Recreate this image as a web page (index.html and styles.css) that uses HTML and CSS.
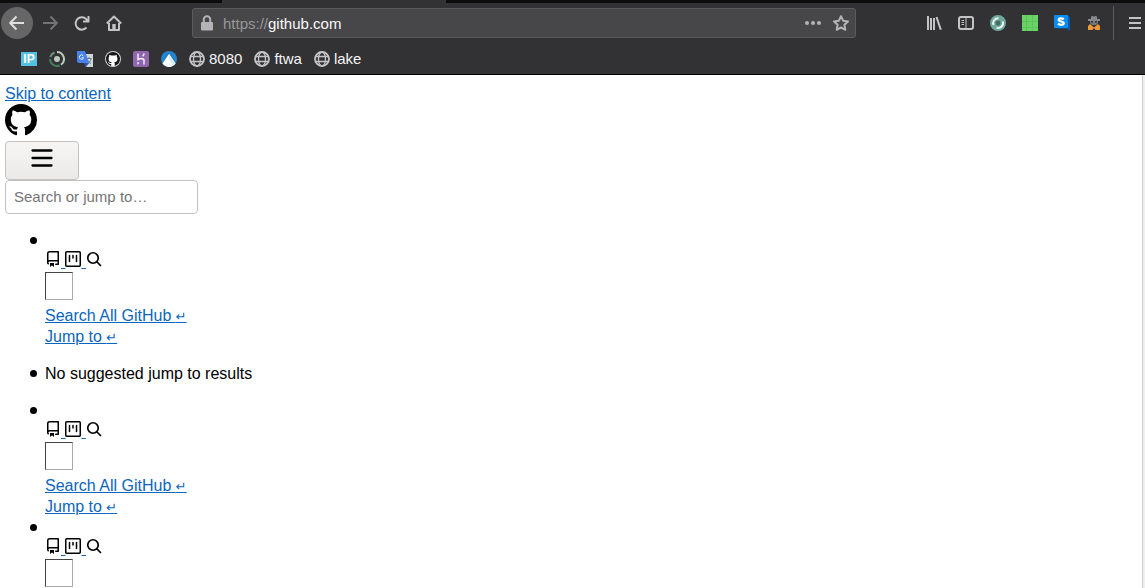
FILE: index.html
```html
<!DOCTYPE html>
<html lang="en">
<head>
<meta charset="utf-8">
<title>GitHub</title>
<link rel="stylesheet" href="styles.css">
</head>
<body>
<svg class="defs" width="0" height="0" aria-hidden="true">
  <symbol id="mark" viewBox="0 0 16 16"><path d="M8 0C3.58 0 0 3.58 0 8c0 3.54 2.29 6.53 5.47 7.59.4.07.55-.17.55-.38 0-.19-.01-.82-.01-1.49-2.01.37-2.53-.49-2.69-.94-.09-.23-.48-.94-.82-1.13-.28-.15-.68-.52-.01-.53.63-.01 1.08.58 1.23.82.72 1.21 1.87.87 2.33.66.07-.52.28-.87.51-1.07-1.78-.2-3.64-.89-3.64-3.95 0-.87.31-1.59.82-2.15-.08-.2-.36-1.02.08-2.12 0 0 .67-.21 2.2.82.64-.18 1.32-.27 2-.27s1.36.09 2 .27c1.53-1.04 2.2-.82 2.2-.82.44 1.1.16 1.92.08 2.12.51.56.82 1.27.82 2.15 0 3.07-1.87 3.75-3.65 3.95.29.25.54.73.54 1.48 0 1.07-.01 1.93-.01 2.2 0 .21.15.46.55.38A8.01 8.01 0 0 0 16 8c0-4.42-3.58-8-8-8z"/></symbol>
  <symbol id="repo" viewBox="0 0 16 16"><path fill-rule="evenodd" d="M2 2.5A2.5 2.5 0 014.500 0h8.750a.75.75 0 01.75.75v12.500a.75.75 0 01-.75.75h-2.500a.75.75 0 110-1.500h1.750v-2h-8a1 1 0 00-.714 1.700.75.75 0 01-1.072 1.050A2.495 2.495 0 012 11.500v-9zm10.500-1V9h-8c-.356 0-.694.074-1 .208V2.500a1 1 0 011-1h8zM5 12.250v3.250a.25.25 0 00.4.2l1.450-1.087a.25.25 0 01.3 0L8.600 15.700a.25.25 0 00.4-.2v-3.250a.25.25 0 00-.25-.25h-3.500a.25.25 0 00-.25.25z"/></symbol>
  <symbol id="project" viewBox="0 0 16 16"><rect x=".75" y=".75" width="14.500" height="14.500" rx="1" fill="none" stroke="currentColor" stroke-width="1.500"/><path d="M4.500 4.500v6M8 4.500v2.500M11.500 4.500v6" fill="none" stroke="currentColor" stroke-width="1.500" stroke-linecap="round"/></symbol>
  <symbol id="search" viewBox="0 0 16 16"><circle cx="7" cy="7" r="5.250" fill="none" stroke="currentColor" stroke-width="1.700"/><path d="M11 11l3.500 3.500" fill="none" stroke="currentColor" stroke-width="1.700" stroke-linecap="round"/></symbol>
  <symbol id="globe" viewBox="0 0 16 16"><g fill="none" stroke="currentColor"><circle cx="8" cy="8" r="7" stroke-width="1.800"/><ellipse cx="8" cy="8" rx="3.500" ry="7" stroke-width="1.300"/><path d="M1.500 5.500h13M1.500 10.500h13" stroke-width="1.300"/></g></symbol>
</svg>

<header class="chrome">
  <div class="tabs"><div class="tab"></div></div>
  <nav class="toolbar" aria-label="Navigation">
    <button class="tool back" aria-label="Back"><svg width="16" height="16" viewBox="0 0 16 16"><path d="M15 8H1.500M7.500 1.500L1.200 8l6.300 6.500" class="line"/></svg></button>
    <button class="tool dim" aria-label="Forward"><svg width="16" height="16" viewBox="0 0 16 16"><path d="M1 8h13.500M8.500 1.500L14.800 8l-6.300 6.500" class="line"/></svg></button>
    <button class="tool" aria-label="Reload"><svg width="16" height="16" viewBox="0 0 16 16"><path d="M12.500 12.500A6.200 6.200 0 1 1 13.500 6M14.500 1v5.500H9" class="line"/></svg></button>
    <button class="tool" aria-label="Home"><svg width="16" height="16" viewBox="0 0 16 16"><path d="M.8 8.500L8 1.500l7.200 7M3 8v7h10V8" class="line"/><path d="M6.300 15V9h3.400v6z" fill="currentColor"/></svg></button>
    <div class="address">
      <svg width="12" height="16" viewBox="0 0 12 16"><path d="M2.800 8V4.500a3.200 3.200 0 0 1 6.400 0V8" class="line"/><rect y="7" width="12" height="8.500" rx="1" fill="currentColor"/></svg>
      <div class="url"><span class="scheme">https://</span>github.com</div>
      <button class="small" aria-label="Page actions"><svg width="16" height="16" viewBox="0 0 16 16" fill="currentColor"><circle cx="2" cy="8" r="2"/><circle cx="8" cy="8" r="2"/><circle cx="14" cy="8" r="2"/></svg></button>
      <button class="small" aria-label="Bookmark"><svg width="16" height="16" viewBox="0 0 16 16"><path d="M8 1.200l2.100 4.500 4.900.7-3.600 3.400.9 5L8 12.400l-4.300 2.400.9-5L1 6.400l4.900-.7z" class="line"/></svg></button>
    </div>
    <button class="tool" aria-label="Library"><svg width="16" height="16" viewBox="0 0 16 16"><path d="M2 1v14M5 3v12M8 3v12M10.500 2l4.300 12.800" class="line"/></svg></button>
    <button class="tool" aria-label="Sidebars"><svg width="16" height="16" viewBox="0 0 16 16"><rect x="1" y="2" width="14" height="12" rx="2" class="line"/><path d="M8 2v12M3.500 5.500h2.500M3.500 7.500h2.500M3.500 9.500h2.500" class="line thin"/></svg></button>
    <button class="tool" aria-label="Cookie extension"><svg width="16" height="16" viewBox="0 0 16 16"><circle cx="8" cy="8" r="8" fill="#6fa898"/><path d="M3.500 10A5 5 0 0 1 8.500 3.200M12.800 6.500A5 5 0 0 1 6.500 12.800" fill="none" stroke="#e8f4f0" stroke-width="2"/><circle cx="8" cy="8" r="2.500" fill="#3f6f65"/></svg></button>
    <button class="tool" aria-label="Grid extension"><svg width="16" height="16" viewBox="0 0 16 16"><path fill="#6bd267" d="M0 0h16v16H0z"/><path d="M4.500 0v16M10.500 0v16M0 6.500h16M0 12.500h16" stroke="#5cc35a" fill="none"/></svg></button>
    <button class="tool" aria-label="Stylus"><svg width="16" height="16" viewBox="0 0 16 16"><path fill="#0a58a8" d="M13 0l3 2v14l-3-2.500H3L0 12z"/><path fill="#0b8cf2" d="M0 0h14v13H0z"/><path d="M9.700 4.400C8.200 2.900 4.600 2.900 4.700 4.900s5 1.200 5 3.200-3.700 2.300-5.700.6" fill="none" stroke="#fff" stroke-width="2.300"/></svg></button>
    <button class="tool" aria-label="Disguise extension"><svg width="16" height="16" viewBox="0 0 16 16"><path fill="#88898d" d="M5.500 1h1.500l1 1 1-1h1.500l.8 3H14v2H2V4h2.700z"/><path fill="#77787c" d="M4 6h8v2l-2 2H6L4 8z"/><path fill="#333" d="M5 6h2v1.500H5zM9 6h2v1.500H9z"/><path fill="#ef9637" d="M4 9l4 3.500L12 9l2 2v4H9.500L8 13l-1.500 2H2v-4z"/></svg></button>
    <span class="divider"></span>
    <button class="menu" aria-label="Open menu"><svg width="12" height="16" viewBox="0 0 12 16"><path d="M0 3h12M0 8h12M0 13h12" class="line"/></svg></button>
  </nav>
  <nav class="bookmarks" aria-label="Bookmarks">
    <a href="#" class="ip" aria-label="IP address">IP</a>
    <a href="#" aria-label="Circle"><svg width="16" height="16" viewBox="0 0 16 16" fill="none" stroke-width="2"><circle cx="8" cy="8" r="3" fill="#b9c9bd"/><path d="M8 1a7 7 0 0 1 4 12.700" stroke="#b7cbbd"/><path d="M10.500 14.500A7 7 0 0 1 1 8" stroke="#42815b"/><path d="M1.300 6A7 7 0 0 1 5.500 1.500" stroke="#67987a"/></svg></a>
    <a href="#" aria-label="Translate"><svg width="16" height="16" viewBox="0 0 16 16"><path fill="#d4d7d8" d="M6 3h10v13H9z"/><path d="M9.500 7.500h5M12 6v2M14 8c-.5 2.500-2 4-3.500 4.500M10.500 9c.5 1.500 2 3 3.500 3.500" stroke="#607d8b" fill="none"/><path fill="#4780e8" d="M0 0h8l4 12H1.500L0 11z"/><path fill="#3057b2" d="M7 12h5l-3 4z"/><path d="M6.300 4.800a2.200 2.200 0 1 0 .3 2H4.700" stroke="#e7efff" fill="none"/></svg></a>
    <a href="#" aria-label="GitHub"><svg width="16" height="16" viewBox="0 0 16 16"><circle cx="8" cy="8" r="8" fill="#d5d5d5"/><circle cx="8" cy="8" r="7" fill="#fff"/><use href="#mark" x="1" y="1" width="14" height="14" fill="#171717"/></svg></a>
    <a href="#" aria-label="Heroku"><svg width="16" height="16" viewBox="0 0 16 16"><rect width="16" height="16" rx="2" fill="#9067ad"/><path d="M5 2.500v6c2-1 6-1.700 6 1v4M11 2.500c0 1-.5 2-1.300 2.800" fill="none" stroke="#eee4f5" stroke-width="1.600"/><path fill="#eee4f5" d="M4.300 10.500L6.500 12l-2.200 2z"/></svg></a>
    <a href="#" aria-label="Peak"><svg width="16" height="16" viewBox="0 0 16 16"><circle cx="8" cy="8" r="8" fill="#2384cb"/><path d="M8 3l6.500 9.600A8 8 0 0 1 1.500 12.600z" fill="#fff"/><path d="M8 3l6.500 9.600-2.500 2L8 8z" fill="#d9edf8"/></svg></a>
    <a href="#"><svg width="16" height="16"><use href="#globe"/></svg>8080</a>
    <a href="#"><svg width="16" height="16"><use href="#globe"/></svg>ftwa</a>
    <a href="#"><svg width="16" height="16"><use href="#globe"/></svg>lake</a>
  </nav>
</header>

<div class="viewport">
  <main class="page">
    <a href="#results">Skip to content</a>
    <a class="logo" href="#" aria-label="GitHub home"><svg width="32" height="32"><use href="#mark"/></svg></a>
    <button class="toggle" aria-label="Toggle navigation"><svg width="22" height="18" viewBox="0 0 22 18"><path d="M1.500 1.500h19M1.500 9h19M1.500 16.500h19" fill="none" stroke="#000" stroke-width="2.300" stroke-linecap="round"/></svg></button>
    <input class="query" type="text" placeholder="Search or jump to…" aria-label="Search or jump to">

    <ul>
      <li>
        <div>&nbsp;</div>
        <a class="icons" href="#" aria-label="Suggestion"><svg width="16" height="16"><use href="#repo"/></svg> <svg width="16" height="16"><use href="#project"/></svg> <svg width="16" height="16"><use href="#search"/></svg></a>
        <div class="avatar"></div>
        <a href="#">Search All GitHub <span class="enter">↵</span></a>
        <a href="#">Jump to <span class="enter">↵</span></a>
      </li>
    </ul>
    <ul id="results">
      <li>No suggested jump to results</li>
    </ul>
    <ul>
      <li>
        <div>&nbsp;</div>
        <a class="icons" href="#" aria-label="Suggestion"><svg width="16" height="16"><use href="#repo"/></svg> <svg width="16" height="16"><use href="#project"/></svg> <svg width="16" height="16"><use href="#search"/></svg></a>
        <div class="avatar"></div>
        <a href="#">Search All GitHub <span class="enter">↵</span></a>
        <a href="#">Jump to <span class="enter">↵</span></a>
      </li>
      <li>
        <div>&nbsp;</div>
        <a class="icons" href="#" aria-label="Suggestion"><svg width="16" height="16"><use href="#repo"/></svg> <svg width="16" height="16"><use href="#project"/></svg> <svg width="16" height="16"><use href="#search"/></svg></a>
        <div class="avatar"></div>
      </li>
    </ul>
  </main>
  <div class="scrollbar"></div>
</div>
</body>
</html>
```

FILE: styles.css
```css
* { box-sizing: border-box; }

body {
  margin: 0;
  height: 100vh;
  display: flex;
  flex-direction: column;
  overflow: hidden;
  background: #fff;
  color: #000;
  font: 16px/21px "Liberation Sans", Arial, sans-serif;
}

.defs { position: absolute; }

/* Browser chrome */
.chrome {
  flex: none;
  background: #323234;
  border-bottom: 1px solid #000;
  color: #f4f4f5;
  font-size: 15px;
}
.tabs { height: 3px; padding-left: 222px; background: #0c0c0d; }
.tab { width: 224px; height: 3px; background: #323234; }

.toolbar {
  display: flex;
  align-items: center;
  height: 40px;
  padding-left: 1px;
  color: #c4c4c5;
}
.toolbar button {
  display: flex;
  align-items: center;
  justify-content: center;
  padding: 0;
  border: 0;
  background: none;
  color: inherit;
}
.toolbar .tool { flex: none; width: 32px; height: 32px; }
.toolbar .back { margin-right: 1px; background: #666667; border-radius: 50%; color: #e0e0e0; }
.toolbar .dim { color: #747475; }
.line { fill: none; stroke: currentColor; stroke-width: 2; stroke-linejoin: round; }
.thin { stroke-width: 1; }

.address {
  flex: 1;
  display: flex;
  align-items: center;
  gap: 12px;
  height: 30px;
  margin: 0 62px;
  padding: 0 6px 0 8px;
  border: 1px solid #5b5b5d;
  border-radius: 3px;
  background: #474749;
  color: #b4b4b5;
}
.url { flex: 1; margin-left: -2px; color: #f9f9fa; }
.scheme { color: #98989a; }

.divider { width: 1px; height: 34px; margin-left: 3px; background: #5b5b5d; }
.toolbar .menu { width: 12px; height: 32px; margin: 0 4px 0 15px; }

.bookmarks {
  display: flex;
  align-items: center;
  gap: 12px;
  height: 31px;
  padding-left: 21px;
}
.bookmarks a {
  display: flex;
  align-items: center;
  gap: 4px;
  color: inherit;
  text-decoration: none;
}
.bookmarks svg { color: #c4c4c5; }
.bookmarks .ip {
  justify-content: center;
  width: 16px;
  height: 14px;
  background: #55bfe2;
  color: #fff;
  font-size: 12px;
  font-weight: bold;
  line-height: 14px;
}

/* Page */
.viewport { flex: 1; min-height: 0; display: flex; }
.page { flex: 1; overflow: hidden; padding: 8px 5px 0; }
.scrollbar { width: 3px; background: #f0f0f0; border-left: 1px solid #cdcdcd; }

.page a { display: block; width: max-content; color: #0b66bd; }
.page .logo { height: 37px; }
.logo svg { display: block; fill: #000; }

.toggle {
  display: flex;
  align-items: flex-start;
  justify-content: center;
  width: 74px;
  height: 39px;
  padding: 7px 0 0;
  border: 1px solid #c4c3c1;
  border-radius: 4px;
  background: linear-gradient(#f6f5f4, #eceae9);
}
.query {
  display: block;
  width: 193px;
  height: 34px;
  padding: 0 8px 2px;
  border: 1px solid #c4c3c1;
  border-radius: 4px;
  background: #fff;
  font: inherit;
  font-size: 15px;
}
.query::placeholder { color: #757575; }

ul { margin: 16px 0; padding-left: 40px; list-style: none; }
li { position: relative; }
li::before {
  content: "";
  position: absolute;
  top: 7px;
  left: -15px;
  width: 7px;
  height: 7px;
  border-radius: 50%;
  background: #000;
}
.icons svg { color: #000; fill: #000; vertical-align: baseline; }
.page .icons { height: 21px; }
.avatar {
  width: 28px;
  height: 28px;
  margin-bottom: 5px;
  border: 1px solid;
  border-color: #444 #aaa #aaa #444;
}
.enter { font: 13px/1 "DejaVu Sans", sans-serif; }
```
